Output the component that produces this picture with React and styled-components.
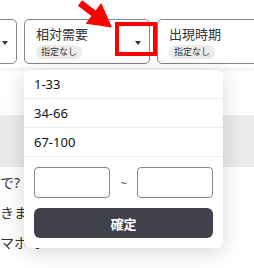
import React from "react";
import styled, { createGlobalStyle } from "styled-components";

const Global = createGlobalStyle`
  html, body { margin: 0; padding: 0; background: #fff; overflow: hidden; }
  body { font-family: "Noto Sans", "Noto Sans CJK JP", sans-serif; color: #222; }
  * { box-sizing: border-box; }
`;

const Page = styled.div`
  position: relative;
  width: 254px;
  height: 268px;
  overflow: hidden;
  background: #fff;
`;

const Header = styled.div`
  height: 68px;
  padding-top: 19px;
  background: #fff;
  box-shadow: 0 2px 4px rgba(0, 0, 0, 0.06);
`;

const FilterRow = styled.div`
  display: flex;
  gap: 7px;
  margin-left: -109px;
`;

const FilterButton = styled.div`
  flex: 0 0 126px;
  height: 45px;
  border: 1px solid #85858f;
  border-radius: 5px;
  background: #fff;
  display: flex;
  align-items: center;
  padding: 0 8px 0 11px;
`;

const FilterText = styled.div`
  flex: 1;
  display: flex;
  flex-direction: column;
  align-items: flex-start;
  gap: 2px;
`;

const Title = styled.div`
  font-size: 13px;
  line-height: 18px;
  color: #333;
`;

const Badge = styled.span`
  font-size: 9px;
  line-height: 14px;
  height: 14px;
  padding: 0 5px;
  background: #ececec;
  border-radius: 7px;
  color: #333;
`;

const Caret = styled.span`
  width: 0;
  height: 0;
  border-left: 3.5px solid transparent;
  border-right: 3.5px solid transparent;
  border-top: 4px solid #333;
  margin-top: 2px;
`;

const Spacer = styled.div`
  height: 47px;
`;

const SectionBar = styled.div`
  height: 52px;
  background: #ebebeb;
`;

const FaqList = styled.div`
  padding-top: 1px;
`;

const FaqLine = styled.div`
  font-size: 14px;
  line-height: 30px;
  white-space: nowrap;
  color: #333;
`;

const Panel = styled.div`
  position: absolute;
  z-index: 5;
  left: 24px;
  top: 70px;
  width: 199px;
  height: 178px;
  background: #fff;
  border-radius: 6px;
  box-shadow: 0 4px 22px rgba(0, 0, 0, 0.16);
  overflow: hidden;
`;

const Option = styled.div`
  height: 29px;
  padding-left: 10px;
  display: flex;
  align-items: center;
  font-size: 13px;
  color: #111;
  border-bottom: 1px solid #ececec;
`;

const RangeBox = styled.div`
  padding: 10px;
  display: flex;
  flex-direction: column;
  gap: 10px;
`;

const RangeRow = styled.div`
  display: flex;
  align-items: center;
  justify-content: space-between;
  height: 31px;
`;

const NumInput = styled.div`
  width: 76px;
  height: 31px;
  border: 1px solid #86868e;
  border-radius: 4px;
`;

const Tilde = styled.span`
  font-size: 10px;
  color: #333;
`;

const Confirm = styled.div`
  flex: 0 0 30px;
  height: 30px;
  border-radius: 6px;
  background: #41414b;
  color: #fff;
  font-weight: bold;
  font-size: 13px;
  display: flex;
  align-items: center;
  justify-content: center;
`;

const Highlight = styled.div`
  position: absolute;
  z-index: 6;
  left: 115px;
  top: 22px;
  width: 42px;
  height: 34px;
  border: 4.5px solid #ff0000;
`;

const Arrow = styled.svg`
  position: absolute;
  z-index: 6;
  left: 0;
  top: 0;
`;

function Filter({ title, badge }) {
  return (
    <FilterButton>
      <FilterText>
        {title && <Title>{title}</Title>}
        {badge && <Badge>{badge}</Badge>}
      </FilterText>
      <Caret />
    </FilterButton>
  );
}

export default function App() {
  return (
    <Page>
      <Global />
      <Header>
        <FilterRow>
          <Filter title="地域" badge="指定なし" />
          <Filter title="相対需要" badge="指定なし" />
          <Filter title="出現時期" badge="指定なし" />
        </FilterRow>
      </Header>
      <Spacer />
      <SectionBar />
      <FaqList>
        <FaqLine>で?</FaqLine>
        <FaqLine>きますか</FaqLine>
        <FaqLine>マホで</FaqLine>
        <FaqLine>いつ</FaqLine>
      </FaqList>
      <Panel>
        <Option>1-33</Option>
        <Option>34-66</Option>
        <Option>67-100</Option>
        <RangeBox>
          <RangeRow>
            <NumInput />
            <Tilde>~</Tilde>
            <NumInput />
          </RangeRow>
          <Confirm>確定</Confirm>
        </RangeBox>
      </Panel>
      <Highlight />
      <Arrow width="254" height="40" viewBox="0 0 254 40">
        <polygon
          points="82.1,0.2 95.6,10.5 101.3,2.9 112,27.5 85.7,23.7 91.4,16.1 77.9,5.8"
          fill="#ff0000"
        />
      </Arrow>
    </Page>
  );
}
